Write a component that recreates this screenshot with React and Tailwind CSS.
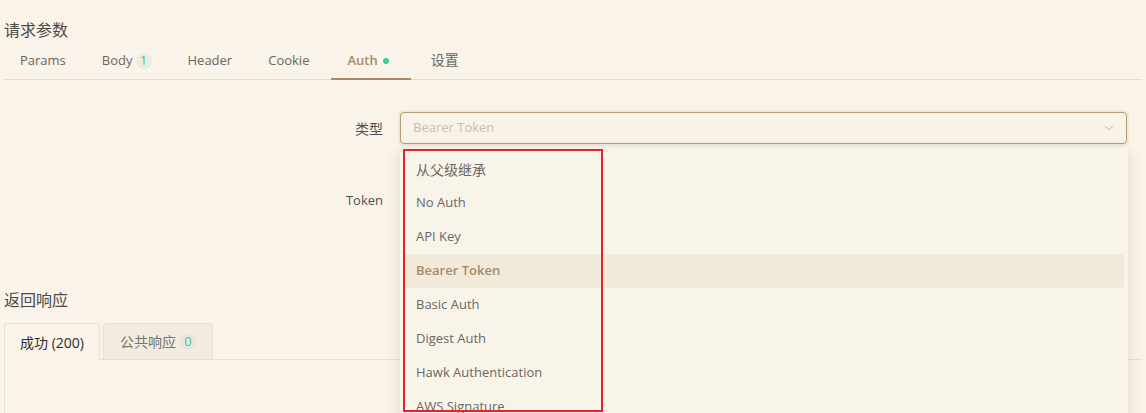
import React from "react";
import { ChevronDown } from "lucide-react";

const requestTabs = [
  { label: "Params" },
  { label: "Body", badge: "1" },
  { label: "Header" },
  { label: "Cookie" },
  { label: "Auth", dot: true, active: true },
  { label: "设置", cjk: true },
];

const authTypes = [
  { label: "从父级继承", cjk: true },
  { label: "No Auth" },
  { label: "API Key" },
  { label: "Bearer Token", selected: true },
  { label: "Basic Auth" },
  { label: "Digest Auth" },
  { label: "Hawk Authentication" },
  { label: "AWS Signature" },
  { label: "NTLM Authentication" },
];

const App = () => {
  return (
    <div className="relative h-[413px] w-full overflow-hidden bg-[#f9f3e9] font-['Open_Sans','Noto_Sans_CJK_SC',sans-serif] text-[13px] text-[#6b6762]">
      <div className="px-1 pt-[19px]">
        {/* Request params */}
        <h2 className="text-[16px] leading-[22px] text-[#4d4a46]">请求参数</h2>
        <div className="flex gap-1 border-b border-[#e3dccf]">
          {requestTabs.map((tab) => (
            <div
              key={tab.label}
              className={`-mb-px flex h-[39px] items-center border-b-2 pl-4 ${
                tab.dot ? "pr-[22px]" : "pr-4"
              } ${
                tab.active
                  ? "ml-[2px] border-[#a88b66] font-semibold text-[#a88b66]"
                  : "border-transparent"
              } ${tab.cjk ? "text-[14px]" : "pt-[3px]"}`}
            >
              <span>{tab.label}</span>
              {tab.badge && (
                <span className="ml-[3px] flex h-4 w-4 items-center justify-center rounded-full bg-[#efebe0] text-[13px] text-[#43c99b]">
                  {tab.badge}
                </span>
              )}
              {tab.dot && (
                <span className="ml-[5px] h-[6px] w-[6px] rounded-full bg-[#3ccc9c]" />
              )}
            </div>
          ))}
        </div>

        {/* Auth form */}
        <div className="mt-8 flex items-center">
          <label className="w-[379px] text-right text-[14px] text-[#55514c]">
            类型
          </label>
          <div className="ml-[17px] mr-[15px] flex h-8 flex-1 items-center justify-between rounded-[4px] border border-[#b49c7a] bg-[#f8f2e7] pl-3 pr-[10px] shadow-[0_0_0_2px_#efe7d8]">
            <span className="text-[#c8beb0]">Bearer Token</span>
            <ChevronDown size={14} strokeWidth={1.5} className="text-[#b1aaa0]" />
          </div>
        </div>
        <div className="mt-[41px] flex h-8 items-center">
          <label className="w-[379px] text-right text-[#55514c]">Token</label>
          <div className="ml-[17px] mr-[15px] h-8 flex-1 rounded-[4px] border border-[#e3dccf]" />
        </div>

        {/* Response */}
        <h2 className="mt-[72px] text-[16px] leading-[22px] text-[#4d4a46]">
          返回响应
        </h2>
        <div className="mt-3 flex gap-[3px] border-b border-[#e6dfd2]">
          <div className="-mb-px flex h-[37px] items-center rounded-t-[4px] border border-b-0 border-[#e6dfd2] bg-[#f9f3e9] px-[15px] text-[14px] text-[#2f2d2a]">
            成功 (200)
          </div>
          <div className="flex h-[36px] items-center rounded-t-[4px] border border-b-0 border-[#e6dfd2] bg-[#f1ecdf] px-4">
            <span className="text-[14px] text-[#77736d]">公共响应</span>
            <span className="ml-1 flex h-4 w-4 items-center justify-center rounded-full bg-[#ebe6da] text-[13px] text-[#43c99b]">
              0
            </span>
          </div>
        </div>
        <div className="h-[120px] border-l border-[#e6dfd2]" />
      </div>

      {/* Select dropdown */}
      <div className="absolute left-[400px] top-[148px] w-[728px] rounded-[4px] bg-[#f9f4ea] p-1 shadow-[0_4px_14px_rgba(90,70,40,0.16)]">
        {authTypes.map((item) => (
          <div
            key={item.label}
            className={`flex h-[34px] items-center rounded-[4px] px-3 ${
              item.selected ? "bg-[#f1e9da] font-semibold text-[#a88b66]" : ""
            } ${item.cjk ? "text-[14px]" : ""}`}
          >
            {item.label}
          </div>
        ))}
      </div>

      {/* Annotation box */}
      <div className="absolute left-[403px] top-[149px] h-[263px] w-[200px] border-2 border-[#e6212a]" />
    </div>
  );
};

export default App;
